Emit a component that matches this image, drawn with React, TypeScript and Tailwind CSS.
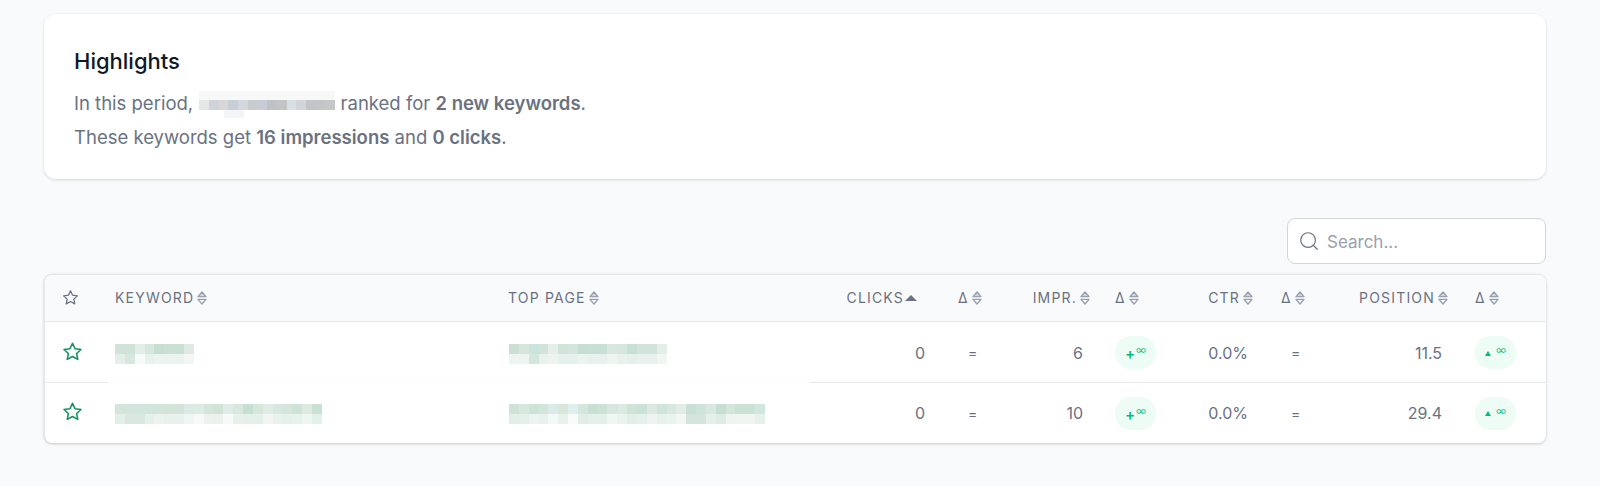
import { Search } from "lucide-react";

const kw1 = [
  ["#cfe3d8", "#cfe3d8", "#e2eee9", "#d6e7dd", "#c6dfd0", "#c9e0d3", "#c9e0d3", "#deeae3"],
  ["#e3efe8", "#d8e8df", "#f6faf8", "#e8f2ed", "#ecf4ef", "#edf4f0", "#ecf3ef", "#f3f7f4"],
];
const kw2 = [
  ["#d4e6dc", "#d2e5da", "#d2e5da", "#d2e5dc", "#d3e5da", "#d2e4d9", "#d2e4d9", "#dceae5", "#dcebe3", "#d4e5db", "#d0e3d8", "#deebe6", "#d9e8dc", "#c6dfd3", "#d5e6da", "#dfece6", "#d7e8e0", "#d5e6dc", "#cde3d6", "#dceadf", "#c9e0d5"],
  ["#e2efe9", "#d8e8df", "#d8e8df", "#e3f0eb", "#ecf3ee", "#e8f1ec", "#e8f1ec", "#eff6f3", "#f6f9f7", "#ecf3ee", "#ebf2ed", "#f5f9f8", "#e8f0ea", "#e4f0ec", "#e4f0ea", "#f2f6f3", "#e9f2ed", "#e4f0ea", "#e8f2ed", "#eff5f0", "#e4f0ea"],
];
const page1 = [
  ["#c9e0d3", "#d8e5da", "#c9e3dd", "#d2e4d9", "#e4efec", "#d1e4d8", "#d3e5dc", "#c6dfd2", "#c8e0d3", "#c8e0d3", "#d8e8e0", "#d5e6dc", "#c8e0d3", "#d2e4da", "#d2e4da", "#e4eee9"],
  ["#eef5f1", "#eef5f1", "#d2e6de", "#e8f1ed", "#edf3ee", "#e6f0ec", "#e6f0ec", "#ecf3ef", "#e8f1ed", "#e8f1ed", "#eef4f0", "#e8f1ed", "#e6f0ea", "#e8f1ed", "#e8f1ed", "#f2f6f3"],
];
const page2 = [
  ["#cfe2d6", "#d6e7de", "#cee3d8", "#d3e4da", "#d9ebe9", "#d9e6db", "#def0ee", "#d5e6dd", "#c8e0d3", "#cde2d7", "#d7e7de", "#daeae3", "#cfe3d8", "#cbe2d8", "#dce9e0", "#cfe5dc", "#d8e8e0", "#e2ede7", "#c9e0d4", "#cee3d9", "#d9e8e0", "#c7dfd2", "#d4e6dc", "#cbe1d4", "#cbe1d4", "#d0e6df"],
  ["#e2eee8", "#e6f0ea", "#ebf4f0", "#e8f1ec", "#f3f9f8", "#e9f1eb", "#f6fbfa", "#e1ede7", "#e6f0eb", "#e6f0eb", "#f0f6f2", "#ebf3ee", "#e2efe9", "#e5f1ec", "#eef4ef", "#e8f2ed", "#ebf3ef", "#f3f8f5", "#d2e5da", "#d4e6dc", "#e5f0ea", "#dfece6", "#eef5f0", "#eff5f1", "#f0f5f1", "#e6f1ec"],
];
const site = ["#e4e6e8", "#d0d3d7", "#d9d6d5", "#c8ced6", "#d3d8dc", "#c9cbcc", "#c8ccd6", "#c1c2c5", "#c3c4c6", "#d9dfe2", "#d2d4d8", "#c3c4c8", "#c4c5c8", "#c6c7c9"];

function StarIcon({ className }: { className: string }) {
  return (
    <svg viewBox="0 0 24 24" className={className} fill="none" stroke="currentColor" strokeWidth="1.8" strokeLinejoin="round">
      <path d="M12 2.6 14.9 8.8 21.7 9.7 16.7 14.3 18 21 12 17.7 6 21 7.3 14.3 2.3 9.7 9.1 8.8Z" />
    </svg>
  );
}

function Pixels({ rows, className }: { rows: string[][]; className?: string }) {
  return (
    <div className={`flex flex-col ${className ?? ""}`}>
      {rows.map((row, i) => (
        <div key={i} className="flex h-[10px]">
          {row.map((c, j) => (
            <div key={j} className="w-[9.85px]" style={{ background: c }} />
          ))}
        </div>
      ))}
    </div>
  );
}

function SortIcon() {
  return (
    <svg viewBox="0 0 10 14" className="ml-[3px] h-[14px] w-[10px] shrink-0 text-gray-400" fill="none" stroke="currentColor" strokeWidth="1.4" strokeLinejoin="round">
      <path d="M5 1 1 5.6h8L5 1Z" fill="#d1d5db" />
      <path d="M5 13 1 8.4h8L5 13Z" />
    </svg>
  );
}

function Head({ label, right, pad, active }: { label: string; right?: boolean; pad: string; active?: boolean }) {
  return (
    <th className={`font-normal ${pad}`}>
      <div className={`flex items-center ${right ? "justify-end" : "justify-start"}`}>
        <span>{label}</span>
        {active ? (
          <svg viewBox="0 0 12 6" className="ml-[1px] h-[6px] w-[12px] text-gray-500" fill="currentColor">
            <path d="M6 0 12 6H0L6 0Z" />
          </svg>
        ) : (
          <SortIcon />
        )}
      </div>
    </th>
  );
}

function Badge({ arrow }: { arrow?: boolean }) {
  return (
    <div className="flex h-[33px] w-[41px] items-center justify-center rounded-[16px] bg-[#edfcf4] text-emerald-500">
      {arrow ? (
        <svg viewBox="0 0 6 5" className="mr-[5px] mt-[1px] h-[5px] w-[6px]" fill="currentColor">
          <path d="M3 0 6 5H0L3 0Z" />
        </svg>
      ) : (
        <span className="mr-[1px] mt-[2px] text-[15px] font-semibold leading-none">+</span>
      )}
      <span className="mb-[4px] text-[11px] font-light leading-none">∞</span>
    </div>
  );
}

function Row({ kw, page, impr, pos, last }: { kw: string[][]; page: string[][]; impr: string; pos: string; last?: boolean }) {
  return (
    <tr className={`[&>td]:pt-[2px] ${last ? "h-[60px]" : "h-[61px] border-b border-gray-200"}`}>
      <td className="pl-[17px] pb-[3px] align-middle">
        <StarIcon className="h-[21px] w-[21px] text-[#15935f]" />
      </td>
      <td className="align-middle"><Pixels rows={kw} className="mt-[2px]" /></td>
      <td className="align-middle"><Pixels rows={page} className="ml-[1px] mt-[2px]" /></td>
      <td className="pr-[16px] text-right">0</td>
      <td className="pl-[27px] text-[14px]">=</td>
      <td className="pr-[16px] text-right">{impr}</td>
      <td className="pl-[16px]"><Badge /></td>
      <td className="pr-[16px] text-right">0.0%</td>
      <td className="pl-[27px] text-[14px]">=</td>
      <td className="pr-[16px] text-right">{pos}</td>
      <td className="pl-[17px]"><Badge arrow /></td>
    </tr>
  );
}

export default function App() {
  return (
    <div className="h-[486px] overflow-hidden bg-[#f9fafb] pl-[44px] pr-[54px] pt-[14px] font-['Inter',sans-serif] text-gray-500">
      {/* Highlights */}
      <section className="h-[165px] rounded-xl bg-white px-[30px] pt-[33px] shadow-[0_1px_3px_rgba(0,0,0,0.14)]">
        <h2 className="text-[22px] font-medium leading-[28px] text-gray-900">Highlights</h2>
        <p className="mt-[16px] text-[18.5px] leading-[24px]">
          In this period,{" "}
          <span className="relative inline-block h-[24px] w-[137px] align-top">
            <span className="absolute left-[1px] top-[9px] flex h-[10px]">
              {site.map((c, i) => (
                <span key={i} className="w-[9.7px]" style={{ background: c }} />
              ))}
            </span>
            <span className="absolute left-[1px] top-0 h-[9px] w-[136px] bg-[#f7f8f8]" />
            <span className="absolute left-[26px] top-[19px] h-[8px] w-[20px] bg-[#f4f5f6]" />
          </span>{" "}
          ranked for <b className="font-semibold">2 new keywords</b>.
        </p>
        <p className="mt-[10px] text-[18.5px] leading-[24px]">
          These keywords get <b className="font-semibold">16 impressions</b> and <b className="font-semibold">0 clicks</b>.
        </p>
      </section>

      {/* Search */}
      <div className="mt-[39px] flex justify-end">
        <div className="flex h-[46px] w-[259px] items-center rounded-lg border border-gray-300 bg-white pl-[10px]">
          <Search className="h-[22px] w-[22px] text-gray-500" strokeWidth={1.3} />
          <span className="ml-[7px] mt-[3px] text-[17px] text-gray-400">Search...</span>
        </div>
      </div>

      {/* Table */}
      <div className="relative mt-[10px] h-[169px] overflow-hidden rounded-lg border-t border-l border-gray-200 bg-white shadow-[0_1px_3px_rgba(0,0,0,0.2)]">
        <table className="w-full table-fixed border-collapse text-left text-[16px]">
          <colgroup>
            <col className="w-[70px]" />
            <col className="w-[393px]" />
            <col className="w-[316px]" />
            <col className="w-[117px]" />
            <col className="w-[75px]" />
            <col className="w-[83px]" />
            <col className="w-[91px]" />
            <col className="w-[74px]" />
            <col className="w-[76px]" />
            <col className="w-[118px]" />
            <col />
          </colgroup>
          <thead className="bg-[#f9fafb] text-[14px] uppercase tracking-[0.085em]">
            <tr className="h-[46px] border-b border-gray-200">
              <th className="pl-[17px] font-normal">
                <StarIcon className="h-[17px] w-[17px] text-gray-500" />
              </th>
              <Head label="Keyword" pad="" />
              <Head label="Top page" pad="" />
              <Head label="Clicks" right active pad="pr-[24px]" />
              <Head label="Δ" pad="pl-[17px]" />
              <Head label="Impr." right pad="pr-[9px]" />
              <Head label="Δ" pad="pl-[16px]" />
              <Head label="CTR" right pad="pr-[11px]" />
              <Head label="Δ" pad="pl-[17px]" />
              <Head label="Position" right pad="pr-[10px]" />
              <Head label="Δ" pad="pl-[17px]" />
            </tr>
          </thead>
          <tbody>
            <Row kw={kw1} page={page1} impr="6" pos="11.5" />
            <Row kw={kw2} page={page2} impr="10" pos="29.4" last />
          </tbody>
        </table>
        {/* blur patch over the row divider */}
        <div className="absolute left-[63px] top-[100px] h-[9px] w-[702px] bg-[#fdfefd]" />
      </div>
    </div>
  );
}
